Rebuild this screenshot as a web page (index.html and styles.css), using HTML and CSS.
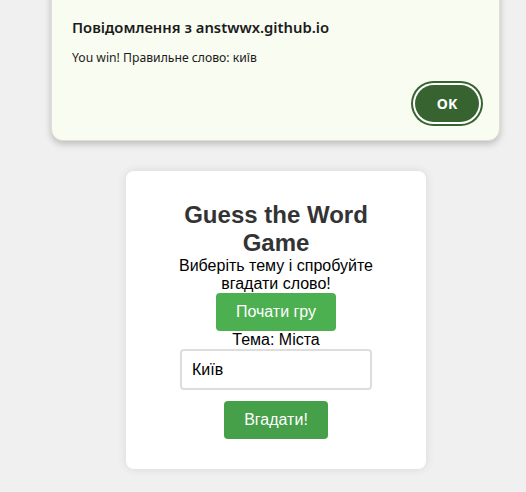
FILE: index.html
```html
<!DOCTYPE html>
<html lang="uk">
<head>
<meta charset="utf-8">
<title>Guess the Word Game</title>
<link rel="stylesheet" href="styles.css">
</head>
<body>
<div class="page">
  <div class="card">
    <h1 class="title">Guess the Word Game</h1>
    <p class="intro">Виберіть тему і спробуйте вгадати слово!</p>
    <button class="btn btn-start">Почати гру</button>
    <div class="topic">Тема: Міста</div>
    <input class="guess" type="text" value="Київ">
    <button class="btn btn-guess">Вгадати!</button>
  </div>
</div>
<div class="dialog">
  <div class="dialog-title">Повідомлення з anstwwx.github.io</div>
  <div class="dialog-msg">You win! Правильне слово: київ</div>
  <div class="dialog-actions">
    <button class="dialog-ok">OK</button>
  </div>
</div>
</body>
</html>
```
FILE: styles.css
```css
html, body {
  margin: 0;
  padding: 0;
}
body {
  background: #f0f0f0;
  font-family: "Liberation Sans", Arial, sans-serif;
  width: 526px;
  height: 492px;
  overflow: hidden;
  position: relative;
}
.page {
  display: flex;
  justify-content: center;
  padding: 171px 0 0 26px;
}
.card {
  width: 240px;
  padding: 30px;
  background: #fff;
  border-radius: 8px;
  box-shadow: 0 0 10px rgba(0, 0, 0, 0.1);
  text-align: center;
}
.title {
  margin: 0;
  font-size: 24px;
  font-weight: bold;
  color: #333;
}
.intro {
  margin: 0;
  font-size: 16px;
  color: #000;
}
.btn {
  display: inline-block;
  border: none;
  border-radius: 4px;
  color: #fff;
  font-family: "Liberation Sans", Arial, sans-serif;
  font-size: 16px;
  line-height: 18px;
  padding: 10px 20px;
  cursor: pointer;
}
.btn-start {
  background: #4caf50;
}
.btn-guess {
  background: #45a049;
}
.topic {
  font-size: 16px;
  color: #000;
}
.guess {
  display: block;
  box-sizing: border-box;
  width: 192px;
  height: 41px;
  margin: 0 auto 11px;
  padding: 10px;
  border: 2px solid #ddd;
  border-radius: 4px;
  font-family: "Liberation Sans", Arial, sans-serif;
  font-size: 16px;
  color: #000;
  outline: none;
}
.dialog {
  position: absolute;
  left: 51px;
  top: -20px;
  width: 449px;
  height: 161px;
  box-sizing: border-box;
  padding: 36px 20px 0 20px;
  background: #f9fcf1;
  border: 1px solid #e6dcd6;
  border-radius: 12px;
  box-shadow: 0 3px 7px rgba(0, 0, 0, 0.22);
  font-family: "Noto Sans", "Open Sans", sans-serif;
  color: #1b1b1b;
}
.dialog-title {
  font-size: 14.8px;
  font-weight: 600;
  line-height: 20px;
}
.dialog-msg {
  margin-top: 12px;
  font-size: 12.2px;
  line-height: 18px;
}
.dialog-actions {
  display: flex;
  justify-content: flex-end;
  margin-top: 18px;
  padding-right: 0;
}
.dialog-ok {
  width: 64px;
  height: 37px;
  border: none;
  border-radius: 19px;
  background: #376330;
  color: #fff;
  font-family: "Noto Sans", "Open Sans", sans-serif;
  font-size: 14px;
  font-weight: 700;
  box-shadow: 0 0 0 2px #fff, 0 0 0 4px #376330;
}
```
